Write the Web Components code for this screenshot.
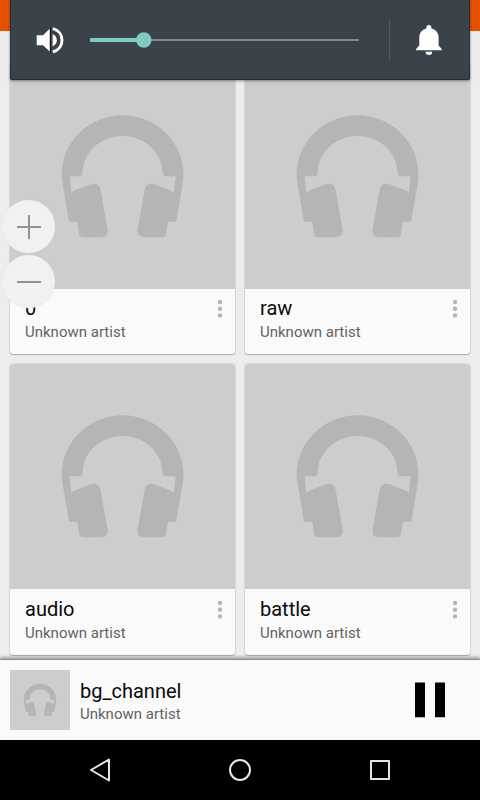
<!DOCTYPE html>
<html lang="en">
<head>
<meta charset="utf-8">
<title>Music</title>
<style>
html,body{margin:0;padding:0}
body{width:480px;height:800px;overflow:hidden;font-family:Roboto,"Liberation Sans",sans-serif;background:#ededed}
</style>
</head>
<body>
<music-app></music-app>
<script>
const define = (name, html) => {
  const t = document.createElement('template');
  t.innerHTML = html;
  customElements.define(name, class extends HTMLElement {
    constructor() {
      super();
      this.attachShadow({mode: 'open'}).appendChild(t.content.cloneNode(true));
    }
  });
};

define('album-art', `
<style>
:host{display:block;background:#cdcdcd;aspect-ratio:1}
svg{display:block;width:100%;height:100%}
</style>
<svg viewBox="0 0 225 225" fill="#b5b5b5">
<path transform="translate(0 .3)" d="M112.600 51C79 51 51.700 77.500 51.700 110.500C51.700 115 52.500 119 53.200 123L59 157.500H67.300L69.200 169.500Q69.800 172.900 73 172.900H91.500Q98.300 172.500 97.600 165.500L90.500 125Q88.500 117.500 80.500 120L64.500 126.200Q62.500 127 61.400 129.200L59.600 112H69.500Q72.500 112 72.700 108C73 88 91 71.800 112.600 71.800S152.200 88 152.500 108Q152.700 112 155.700 112H165.600L163.800 129.200Q162.700 127 160.700 126.200L144.700 120Q136.700 117.500 134.700 125L127.600 165.500Q126.900 172.500 133.700 172.900H152.200Q155.400 172.900 156 169.500L157.900 157.500H166.200L172 123C172.700 119 173.500 115 173.500 110.500C173.500 77.500 146.200 51 112.600 51Z"/>
</svg>`);

define('track-label', `
<style>
:host{display:block}
.title{font-size:20px;line-height:24px;color:#0a0a0a;white-space:nowrap}
.artist{font-size:15px;line-height:18px;margin-top:var(--label-gap,2px);color:#636363;white-space:nowrap}
</style>
<div class="title"><slot name="title"></slot></div>
<div class="artist"><slot name="artist">Unknown artist</slot></div>`);

define('album-card', `
<style>
:host{--label-gap:3px;display:flex;flex-direction:column;background:#fafafa;border-radius:3px;overflow:hidden;box-shadow:0 1px 1px rgba(0,0,0,.22),0 0 1px 1px rgba(0,0,0,.08)}
album-art{flex:none}
.info{flex:1;display:flex;justify-content:space-between;padding:var(--info-top,7px) 12px 0 15px}
.menu{width:6px;height:20px;margin-top:3px}
</style>
<album-art></album-art>
<div class="info">
<track-label><slot name="title" slot="title"></slot></track-label>
<svg class="menu" viewBox="0 0 6 20" fill="#b5b5b5"><circle cx="3" cy="3" r="2.200"/><circle cx="3" cy="9.700" r="2.200"/><circle cx="3" cy="16.400" r="2.200"/></svg>
</div>`);

define('volume-panel', `
<style>
:host{display:flex;align-items:center;box-sizing:border-box;height:80px;background:#3b4249;border:1px solid #1f2e38;border-top:0;border-radius:0 0 2px 2px;box-shadow:0 1px 3px rgba(0,0,0,.4)}
.speaker{margin-left:25px;width:30px;height:30px;flex:none}
.slider{margin-left:24px;width:269px;height:20px;flex:none}
.sep{margin-left:30px;width:1px;height:40px;background:#545b62;flex:none}
.bell{margin-left:24px;width:30px;height:32px;flex:none}
</style>
<svg class="speaker" viewBox="0 0 30 30" fill="#fff">
<path d="M.7 10.300H7L13.700 3.800V26.500L7 20.300H.7Z"/><path d="M14.500 2.500V27.500" stroke="#111820" stroke-width="1"/>
<path d="M16.600 9C19.400 10.300 20.800 12.600 20.800 15.200S19.400 20.100 16.600 21.400Z"/>
<path d="M16.800 3.600C22.500 5 26 9.700 26 15.200S22.500 25.400 16.800 26.800" fill="none" stroke="#fff" stroke-width="2.900"/>
</svg>
<svg class="slider" viewBox="0 0 269 20"><path d="M54 10H269" stroke="#858a8e" stroke-width="2"/><path d="M0 10H54" stroke="#80cbc4" stroke-width="4"/><circle cx="53.800" cy="10" r="7.700" fill="#80cbc4"/></svg>
<div class="sep"></div>
<svg class="bell" viewBox="0 0 30 32" fill="#fff"><path d="M12.400 4.500V3.500A2.500 2.500 0 0 1 17.400 3.500V4.500C22 5.500 24.600 9 24.600 13.300V21.500L27.700 25V26.300H2.100V25L5.300 21.500V13.300C5.300 9 8 5.500 12.400 4.500Z"/><path d="M11.600 27.700H18.200A3.300 3.300 0 0 1 11.600 27.700Z"/></svg>`);

define('zoom-button', `
<style>
:host{display:flex;align-items:center;justify-content:center;width:53px;height:53px;border-radius:50%;background:#f1f1f1;box-shadow:0 0 1px rgba(210,210,210,.8)}
svg{width:24px;height:24px}
</style>
<slot></slot>`);

define('player-bar', `
<style>
:host{display:flex;height:80px;box-sizing:border-box;padding:10px 34px 0 10px;background:#fafafa;box-shadow:0 -1px 1px #909090,0 -3px 3px rgba(0,0,0,.3)}
album-art{width:60px;height:60px}
track-label{flex:1;margin:9px 0 0 10px}
svg{width:31px;height:36px;margin-top:12px}
</style>
<album-art></album-art>
<track-label><span slot="title">bg_channel</span></track-label>
<svg viewBox="0 0 31 36"><path d="M0 .5H10V35.300H0ZM20 .5H30V35.300H20Z"/></svg>`);

define('nav-bar', `
<style>
:host{display:flex;justify-content:center;align-items:center;gap:110px;height:60px;background:#000}
svg{width:30px;height:30px;fill:none;stroke:#e6e6e6;stroke-width:2;stroke-linejoin:round}
</style>
<svg viewBox="0 0 30 30"><path d="M6 15L24 4.500V25.500Z"/></svg>
<svg viewBox="0 0 30 30"><circle cx="15" cy="15" r="10"/></svg>
<svg viewBox="0 0 30 30"><path d="M6 6H24V24H6Z"/></svg>`);

define('music-app', `
<style>
:host{display:flex;flex-direction:column;position:relative;width:480px;height:800px;overflow:hidden;background:#ededed}
.status{height:31px;background:#e65100;flex:none}
main{display:grid;grid-template-columns:225px 225px;grid-template-rows:290px 291px;gap:10px;padding:33px 10px 0;height:596px;flex:none}
.low{--info-top:8px}
player-bar,nav-bar{flex:none;position:relative}
volume-panel{position:absolute;left:10px;top:0;width:460px}
.zoom{position:absolute;left:2px;top:200px;display:flex;flex-direction:column;gap:2px}
</style>
<div class="status"></div>
<main>
<album-card><span slot="title">0</span></album-card>
<album-card><span slot="title">raw</span></album-card>
<album-card class="low"><span slot="title">audio</span></album-card>
<album-card class="low"><span slot="title">battle</span></album-card>
</main>
<player-bar></player-bar>
<nav-bar></nav-bar>
<volume-panel></volume-panel>
<div class="zoom">
<zoom-button><svg width="24" height="24" viewBox="0 0 24 24" stroke="#929292" stroke-width="2"><path d="M0 12H24M12 0V24"/></svg></zoom-button>
<zoom-button><svg width="24" height="24" viewBox="0 0 24 24" stroke="#929292" stroke-width="2"><path d="M0 12H24"/></svg></zoom-button>
</div>`);
</script>
</body>
</html>
